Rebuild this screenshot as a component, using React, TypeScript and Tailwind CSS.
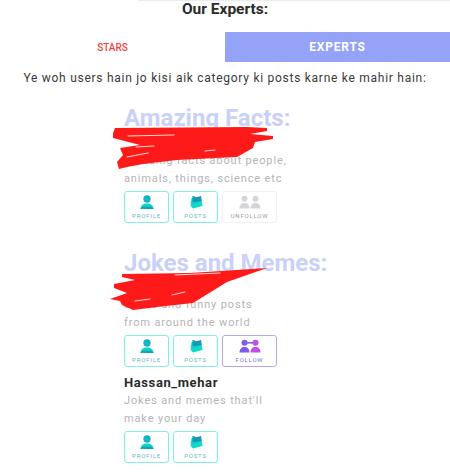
import React from "react";

const font = { fontFamily: "Roboto, 'Liberation Sans', sans-serif" };

function ProfileIcon() {
  return (
    <svg viewBox="0 0 16 14" className="h-[14px] w-4">
      <circle cx="8" cy="4" r="3.4" fill="#14b8c4" stroke="#0f9fb0" strokeWidth="0.6" />
      <path d="M1.5 14c0-3.6 2.6-5.6 6.5-5.6s6.5 2 6.5 5.6z" fill="#0fd3c4" />
      <path d="M1.5 14c.6-1.5 2-2.2 3.5-2.2h6c1.5 0 2.900.7 3.500 2.200z" fill="#0fa5b5" />
    </svg>
  );
}

function PostsIcon() {
  return (
    <svg viewBox="0 0 16 14" className="h-[14px] w-4">
      <path d="M3.5 3l9.500-1 1.500 9-9.500 2.500-2.500-3z" fill="#10d8c8" />
      <path d="M4.5 .8l4 1.500 4.500-1.300.6 5-9 1.500z" fill="#1398b8" />
    </svg>
  );
}

function PeopleIcon({ left, right, linked }: { left: string; right: string; linked?: boolean }) {
  return (
    <svg viewBox="0 0 22 14" className="h-[14px] w-[22px]">
      {linked && <rect x="5" y="3" width="12" height="1.6" fill={left} />}
      <circle cx="5.5" cy="3.8" r="3" fill={left} />
      <path d="M0.500 13.500c0-3.500 2-5.500 5-5.500s5 2 5 5.500z" fill={left} />
      <circle cx="16.500" cy="3.800" r="3" fill={right} />
      <path d="M11.500 13.500c0-3.500 2-5.500 5-5.500s5 2 5 5.500z" fill={right} />
    </svg>
  );
}

function ActionButton({ label, kind }: { label: string; kind: "profile" | "posts" }) {
  return (
    <div className="flex h-[32px] w-[45px] flex-col items-center justify-center gap-[3px] rounded-[3px] border border-[#7ff0e2] bg-white">
      {kind === "profile" ? <ProfileIcon /> : <PostsIcon />}
      <span className="text-[6px] leading-[7px] tracking-[0.8px] text-[#5fb7bd]">{label}</span>
    </div>
  );
}

function FollowButton({ following }: { following: boolean }) {
  return (
    <div
      className={
        following
          ? "flex h-[32px] w-[55px] flex-col items-center justify-center gap-[3px] rounded-[3px] border border-[#f1f1f1] bg-white"
          : "flex h-[32px] w-[55px] flex-col items-center justify-center gap-[3px] rounded-[3px] border border-[#b9a6ea] bg-white"
      }
    >
      {following ? <PeopleIcon left="#d3d5d8" right="#d3d5d8" /> : <PeopleIcon left="#7c5cf0" right="#c04fe8" linked />}
      <span className={following ? "text-[6px] leading-[7px] tracking-[0.8px] text-[#9a9a9a]" : "text-[6px] leading-[7px] tracking-[0.8px] text-[#7d78c8]"}>
        {following ? "UNFOLLOW" : "FOLLOW"}
      </span>
    </div>
  );
}

function Expert({ name, lines, follow }: { name?: string; lines: string[]; follow?: "follow" | "unfollow" }) {
  return (
    <div>
      <div className="h-[18px] text-[13px] font-bold leading-[18px] tracking-[0.6px] text-[#2b2b2b]">{name}</div>
      {lines.map((line) => (
        <div key={line} className="h-[18px] text-[11px] leading-[18px] tracking-[0.86px] text-[#b4b4b4]">
          {line}
        </div>
      ))}
      <div className="mt-[3px] flex gap-[4px]">
        <ActionButton label="PROFILE" kind="profile" />
        <ActionButton label="POSTS" kind="posts" />
        {follow && <FollowButton following={follow === "unfollow"} />}
      </div>
    </div>
  );
}

export default function App() {
  return (
    <div className="relative h-[473px] w-[450px] overflow-hidden bg-white" style={font}>
      <div className="ml-[138px] h-[1px] bg-[#ececec]" />
      <h1 className="mt-[-1px] text-center text-[15.5px] font-bold leading-[19px] text-[#2b2b2b]">Our Experts:</h1>

      <div className="mt-[13px] flex h-[30px]">
        <div className="flex w-[225px] items-center justify-center text-[10px] font-medium text-[#ef4444]">STARS</div>
        <div className="flex w-[225px] items-center justify-center bg-[#94a3f8] text-[12px] font-bold tracking-[0.8px] text-white">
          EXPERTS
        </div>
      </div>

      <p className="mt-[8px] text-center text-[12px] leading-[16px] tracking-[0.73px] text-[#3a3a3a]">
        Ye woh users hain jo kisi aik category ki posts karne ke mahir hain:
      </p>

      <div className="ml-[124px] mt-[18px]">
        <h2 className="text-[24px] font-bold leading-[28px] text-[#c9d2f6]">Amazing Facts:</h2>
        <div className="mt-[2px]">
          <Expert lines={["Amazing facts about people,", "animals, things, science etc"]} follow="unfollow" />
        </div>

        <h2 className="mt-[26px] text-[24px] font-bold leading-[28px] text-[#c9d2f6]">Jokes and Memes:</h2>
        <div className="mt-[1px]">
          <Expert lines={["Jokes and funny posts", "from around the world"]} follow="follow" />
        </div>
        <div className="mt-[7px]">
          <Expert name="Hassan_mehar" lines={["Jokes and memes that'll", "make your day"]} />
        </div>
      </div>

      {/* red marker scribbles */}
      <svg className="pointer-events-none absolute left-0 top-0" width="450" height="473" viewBox="0 0 450 473">
        <path
          d="M115 128L247 127L267 128L267 131L250 134L273 136L273 139L255 142L253 148L237 157L177 160L143 164L127 167L119 169L117 162L123 155L120 148L140 145L113 138L113 133Z"
          fill="#ff1a1a"
        />
        <g fill="none" stroke="#ffd9d0" strokeWidth="1" strokeLinecap="round">
          <path d="M128 136L174 135" />
          <path d="M136 147L154 146" />
          <path d="M127 157L148 153" />
          <path d="M205 151L215 150" />
        </g>
        <path
          d="M122 274L190 273L267 268L227 282L193 303L157 307L133 310L122 305L120 301L110 299L127 293L114 288L114 284L135 280L122 277Z"
          fill="#ff1a1a"
        />
        <g fill="none" stroke="#ffd9d0" strokeWidth="1" strokeLinecap="round">
          <path d="M175 275L220 273" />
          <path d="M172 295L185 292" />
          <path d="M135 301L150 299" />
        </g>
      </svg>
    </div>
  );
}
